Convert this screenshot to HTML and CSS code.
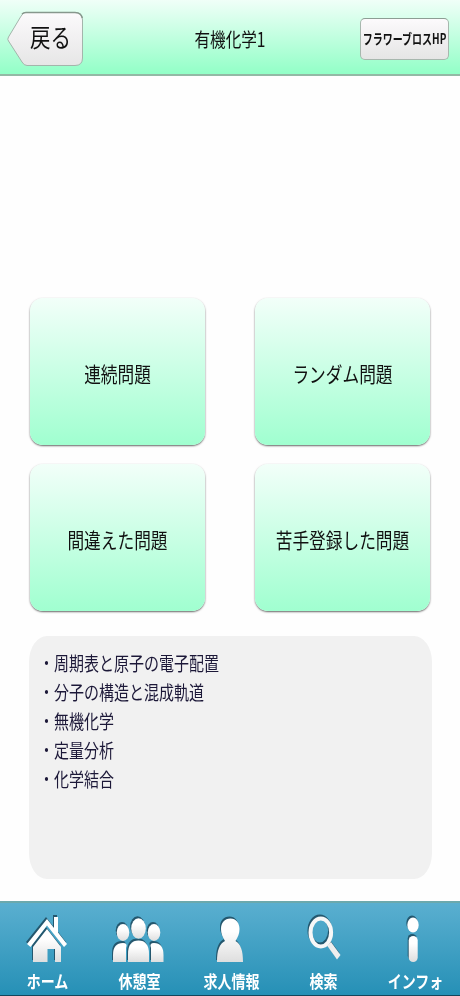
FILE: index.html
```html
<!DOCTYPE html>
<html lang="ja">
<head>
  <meta charset="UTF-8"/>
  <title>有機化学1</title>
  <meta name="viewport" content="width=device-width, initial-scale=1.0"/>
  <link rel="stylesheet" href="styles.css">
</head>
<body>

<div class="app">
  <header class="header">
    <a class="back" href="#">
      <svg class="back-shape" width="80" height="60" viewBox="0 0 80 60">
        <defs>
          <linearGradient id="backFill" x1="0" y1="0" x2="0" y2="1">
            <stop offset="0" stop-color="#fcfafc"/>
            <stop offset="1" stop-color="#e6e6e6"/>
          </linearGradient>
        </defs>
        <path d="M20 4.5H70Q77.500 4.500 77.500 12V50Q77.500 57.500 70 57.500H22Q19 57.500 17 54L3.500 33Q2 31.500 3.500 29L15.500 9Q18 4.500 20 4.500Z" fill="url(#backFill)" stroke="#a3b5ab"/>
        <path d="M17 6Q18.500 4.500 21 4.500H70Q76 4.500 77.300 10" fill="none" stroke="#87978d" stroke-width="1.500"/>
      </svg>
      <span class="tall">戻る</span>
    </a>
    <h1 class="tall">有機化学1</h1>
    <a class="hp" href="#"><span class="tall">フラワーブロスHP</span></a>
  </header>

  <main class="main">
    <div class="menu">
      <button class="btn"><span class="tall">連続問題</span></button>
      <button class="btn"><span class="tall">ランダム問題</span></button>
      <button class="btn"><span class="tall">間違えた問題</span></button>
      <button class="btn"><span class="tall">苦手登録した問題</span></button>
    </div>

    <ul class="topics">
      <li class="tall">周期表と原子の電子配置</li>
      <li class="tall">分子の構造と混成軌道</li>
      <li class="tall">無機化学</li>
      <li class="tall">定量分析</li>
      <li class="tall">化学結合</li>
    </ul>
  </main>

  <nav class="tabs">
    <svg class="defs" width="0" height="0">
      <linearGradient id="iconFill" x1="0" y1="0" x2="0" y2="1">
        <stop offset="0.300" stop-color="#ffffff"/>
        <stop offset="1" stop-color="#dedede"/>
      </linearGradient>
    </svg>
    <a class="tab" href="#">
      <svg class="icon" width="54" height="50" viewBox="0 0 54 50">
        <path d="M8 33L28 8L35 17V6H39V21.500L48 33L45 36L28 14.500L11.500 36Z" fill="#fff"/>
        <path d="M28 19L42 37V52H36V39H28.500V52H14V37Z" fill="url(#iconFill)" transform="translate(0 -1)"/>
      </svg>
      <span class="tall">ホーム</span>
    </a>
    <a class="tab" href="#">
      <svg class="icon" width="54" height="50" viewBox="0 0 54 50">
        <g fill="url(#iconFill)">
          <ellipse cx="12" cy="21.500" rx="6.300" ry="8.500"/>
          <ellipse cx="43" cy="21.500" rx="6.300" ry="8.500"/>
          <path d="M2 51V44Q2 32 12 32Q17 32 15 37V51Z"/>
          <path d="M52.500 51V44Q52.500 32 43 32Q38 32 40 37V51Z"/>
          <ellipse cx="27.500" cy="17.500" rx="7.300" ry="10.300"/>
          <path d="M17 51V43Q17 29.500 27.500 29.500T38 43V51Z"/>
        </g>
      </svg>
      <span class="tall">休憩室</span>
    </a>
    <a class="tab" href="#">
      <svg class="icon" width="54" height="50" viewBox="0 0 54 50">
        <path d="M27.500 7.500C33 7.500 36.500 12 36.500 18C36.500 22.500 35 26 32.500 30C37.500 33 40 39 40 51H14C14 39 16.500 33 22 30C19.500 26 18 22.500 18 18C18 12 21.500 7.500 27.500 7.500Z" fill="url(#iconFill)"/>
      </svg>
      <span class="tall">求人情報</span>
    </a>
    <a class="tab" href="#">
      <svg class="icon" width="54" height="50" viewBox="0 0 54 50">
        <ellipse cx="25.800" cy="21.500" rx="10.300" ry="14" fill="none" stroke="#f7f7f7" stroke-width="4"/>
        <path d="M32 34.500L36 31L45.500 44L42 48.500Z" fill="#eee"/>
      </svg>
      <span class="tall">検索</span>
    </a>
    <a class="tab" href="#">
      <svg class="icon" width="54" height="50" viewBox="0 0 54 50">
        <ellipse cx="26" cy="14" rx="5.700" ry="7.500" fill="#fff"/>
        <rect x="21.700" y="25" width="9" height="26" rx="4.500" fill="url(#iconFill)"/>
      </svg>
      <span class="tall">インフォ</span>
    </a>
  </nav>
</div>

</body>
</html>
```

FILE: styles.css
```css
* {
  margin: 0; padding: 0; box-sizing: border-box;
  font-family: "Noto Sans CJK JP", sans-serif;
}
body {
  background: #fefefe;
  color: #111;
}
a {
  color: inherit;
  text-decoration: none;
}
.app {
  height: 996px;
  display: flex;
  flex-direction: column;
}
/* narrow, tall lettering used everywhere */
.tall {
  display: block;
  transform: scaleY(1.25);
  white-space: nowrap;
}

.header {
  height: 76px;
  display: grid;
  grid-template-columns: 100px 1fr 100px;
  align-items: center;
  background: linear-gradient(#f0fff8, #92ffc7);
  border-bottom: 2px solid #93b9a5;
}
.header h1 {
  font-size: 15.6px;
  font-weight: 400;
  text-align: center;
  padding-top: 2px;
}
.back {
  position: relative;
  width: 80px;
  height: 60px;
  margin: 1px 0 0 5px;
  display: flex;
  align-items: center;
  padding: 0 0 3px 25px;
  font-size: 20.5px;
}
.back-shape {
  position: absolute;
  left: 0;
  top: 0;
}
.back .tall {
  position: relative;
  transform: scaleY(1.22);
}
.hp {
  width: 89px;
  height: 42px;
  margin-top: 4px;
  padding-bottom: 3px;
  display: flex;
  align-items: center;
  justify-content: center;
  background: linear-gradient(#fcfafc, #e5e5e5);
  border: 1px solid #a7b7ae;
  border-top: 1px solid #8d9d94;
  border-radius: 5px;
  font-size: 10px;
  font-weight: 700;
}
.hp .tall {
  transform: scaleY(1.4);
}

.main {
  flex: 1;
  padding: 222px 29px 0 30px;
}
.menu {
  display: grid;
  grid-template-columns: 175px 175px;
  column-gap: 50px;
  row-gap: 19px;
}
.btn {
  height: 147px;
  border: none;
  border-radius: 13px;
  background: linear-gradient(#f2fff9, #a0ffd0);
  box-shadow: 0 1px 2px rgba(0,0,0,0.6);
  color: #111;
  font-size: 16.7px;
  padding-top: 2px;
}
.topics {
  width: 403px;
  height: 243px;
  margin: 25px 0 0 -1px;
  padding: 14px 10px;
  background: #f1f1f1;
  border-radius: 18px / 26px;
  list-style: none;
  color: #1c1838;
  font-size: 15px;
  line-height: 28.9px;
}
.topics li {
  transform-origin: left center;
}
.topics li::before {
  content: "・";
}

.tabs {
  height: 95px;
  display: grid;
  grid-template-columns: repeat(5, 1fr);
  background: linear-gradient(#5aafd0, #2690b6);
  border-top: 2px solid #6ba9ad;
  border-bottom: 1px solid #14465c;
}
.defs {
  position: absolute;
}
.tab {
  display: flex;
  flex-direction: column;
  align-items: center;
  padding-top: 8px;
  color: #fff;
  font-size: 14px;
  font-weight: 700;
  line-height: 20px;
}
.icon {
  overflow: visible;
  filter: drop-shadow(-0.5px -1.5px 0.3px #24576e);
}
.tab .tall {
  margin-top: 9px;
  padding-left: 3px;
}
```
